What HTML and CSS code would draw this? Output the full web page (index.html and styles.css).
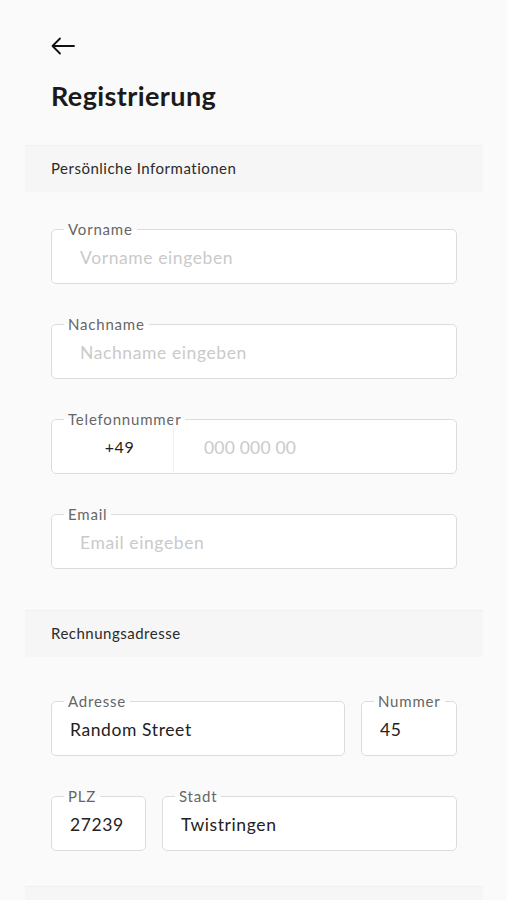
FILE: index.html
```html
<!DOCTYPE html>
<html lang="de">
<head>
    <meta charset="UTF-8">
    <meta name="viewport" content="width=device-width, initial-scale=1.0">
    <title>Registrierung</title>
    <link rel="stylesheet" href="styles.css">
</head>
<body>
    <div class="page">
        <button class="back" aria-label="Zurück">
            <svg width="24" height="18" viewBox="0 0 24 18" fill="none" stroke="#111" stroke-width="1.8" stroke-linecap="round" stroke-linejoin="round">
                <path d="M23 9H1.5M9 1.5L1.5 9L9 16.5"/>
            </svg>
        </button>

        <h1>Registrierung</h1>

        <div class="section first">Persönliche Informationen</div>

        <div class="fields">
            <fieldset class="field">
                <legend>Vorname</legend>
                <input type="text" placeholder="Vorname eingeben">
            </fieldset>

            <fieldset class="field">
                <legend>Nachname</legend>
                <input type="text" placeholder="Nachname eingeben">
            </fieldset>

            <fieldset class="field phone">
                <legend>Telefonnummer</legend>
                <div class="phone-row">
                    <div class="prefix">+49</div>
                    <input type="tel" placeholder="000 000 00">
                </div>
            </fieldset>

            <fieldset class="field">
                <legend>Email</legend>
                <input type="email" placeholder="Email eingeben">
            </fieldset>
        </div>

        <div class="section">Rechnungsadresse</div>

        <div class="fields address">
            <div class="row">
                <fieldset class="field grow">
                    <legend>Adresse</legend>
                    <input type="text" class="filled" value="Random Street">
                </fieldset>
                <fieldset class="field small">
                    <legend>Nummer</legend>
                    <input type="text" class="filled" value="45">
                </fieldset>
            </div>
            <div class="row">
                <fieldset class="field small plz">
                    <legend>PLZ</legend>
                    <input type="text" class="filled" value="27239">
                </fieldset>
                <fieldset class="field grow">
                    <legend>Stadt</legend>
                    <input type="text" class="filled" value="Twistringen">
                </fieldset>
            </div>
        </div>

        <div class="section last"></div>
    </div>
</body>
</html>
```

FILE: styles.css
```css
* {
    box-sizing: border-box;
    font-family: Lato, "Open Sans", sans-serif;
}

body {
    margin: 0;
    background: #fafafa;
    color: #222;
}

.page {
    padding: 28px 24px 0 25px;
}

.back {
    display: block;
    background: none;
    border: 0;
    padding: 0;
    margin: 9px 0 0 26px;
    width: 24px;
    height: 18px;
    cursor: pointer;
}

.back svg {
    display: block;
}

h1 {
    margin: 24px 0 0 26px;
    font-size: 27px;
    font-weight: 700;
    color: #1a1a1a;
    line-height: 34px;
    letter-spacing: 0.4px;
}

.section {
    margin-top: 41px;
    height: 47px;
    background: #f6f6f6;
    border-top: 1px solid #f0f0f0;
    padding: 0 0 0 26px;
    font-size: 15px;
    line-height: 44px;
    letter-spacing: 0.5px;
    color: #2a2a2a;
}

.section.first {
    margin-top: 32px;
}

.section.last {
    margin-top: 35px;
}

.fields {
    padding: 29px 0 0 26px;
    display: flex;
    flex-direction: column;
    gap: 32px;
    width: 432px;
}

.fields.address {
    padding-top: 36px;
}

.row {
    display: flex;
    gap: 16px;
}

.field {
    margin: 0;
    padding: 0 0 6px 0;
    border: 1px solid #dcdcdc;
    border-radius: 5px;
    background: #fff;
    min-width: 0;
}

.field legend {
    margin-left: 12px;
    padding: 0 4px;
    font-size: 15px;
    line-height: 16px;
    letter-spacing: 0.8px;
    color: #666;
}

.field input {
    display: block;
    width: 100%;
    height: 40px;
    border: 0;
    outline: none;
    background: transparent;
    padding: 0 0 0 28px;
    font-size: 17.5px;
    letter-spacing: 0.6px;
    color: #222;
}

.field input::placeholder {
    color: #cacaca;
}

.field input.filled {
    padding-left: 18px;
    color: #222;
}

.phone-row {
    display: flex;
    height: 40px;
}

.phone .prefix {
    width: 122px;
    flex: none;
    text-align: center;
    padding: 8px 0 0 14px;
    margin: -8px 0 -6px 0;
    height: 54px;
    line-height: 40px;
    font-size: 16px;
    letter-spacing: 0.5px;
    color: #222;
    border-right: 1px solid #f0f0f0;
}

.phone input {
    padding-left: 30px;
    letter-spacing: 0.2px;
}

.grow {
    flex: 1;
}

.small {
    width: 96px;
    flex: none;
}

.plz {
    width: 95px;
}
```
